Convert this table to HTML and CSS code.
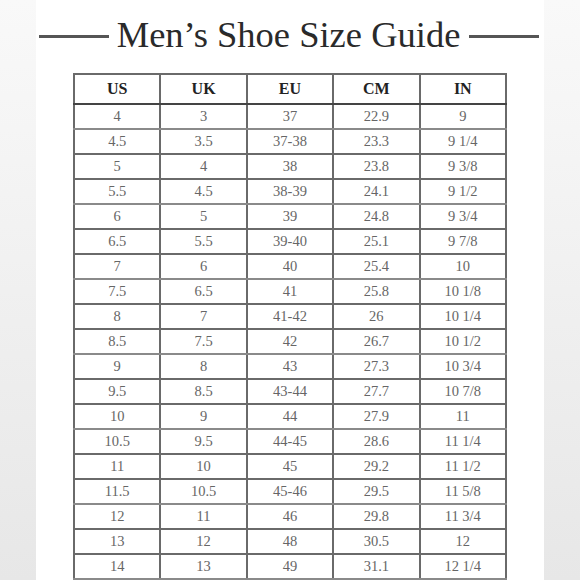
FILE: index.html
```html
<!DOCTYPE html>
<html>
<head>
<meta charset="utf-8">
<link rel="stylesheet" href="styles.css">
</head>
<body>
<div class="panel">
  <div class="title">
    <span class="rule"></span>
    <h1>Men’s Shoe Size Guide</h1>
    <span class="rule"></span>
  </div>
  <table class="sizes">
    <thead>
      <tr><th>US</th><th>UK</th><th>EU</th><th>CM</th><th>IN</th></tr>
    </thead>
    <tbody>
      <tr><td>4</td><td>3</td><td>37</td><td>22.9</td><td>9</td></tr>
      <tr><td>4.5</td><td>3.5</td><td>37-38</td><td>23.3</td><td>9 1/4</td></tr>
      <tr><td>5</td><td>4</td><td>38</td><td>23.8</td><td>9 3/8</td></tr>
      <tr><td>5.5</td><td>4.5</td><td>38-39</td><td>24.1</td><td>9 1/2</td></tr>
      <tr><td>6</td><td>5</td><td>39</td><td>24.8</td><td>9 3/4</td></tr>
      <tr><td>6.5</td><td>5.5</td><td>39-40</td><td>25.1</td><td>9 7/8</td></tr>
      <tr><td>7</td><td>6</td><td>40</td><td>25.4</td><td>10</td></tr>
      <tr><td>7.5</td><td>6.5</td><td>41</td><td>25.8</td><td>10 1/8</td></tr>
      <tr><td>8</td><td>7</td><td>41-42</td><td>26</td><td>10 1/4</td></tr>
      <tr><td>8.5</td><td>7.5</td><td>42</td><td>26.7</td><td>10 1/2</td></tr>
      <tr><td>9</td><td>8</td><td>43</td><td>27.3</td><td>10 3/4</td></tr>
      <tr><td>9.5</td><td>8.5</td><td>43-44</td><td>27.7</td><td>10 7/8</td></tr>
      <tr><td>10</td><td>9</td><td>44</td><td>27.9</td><td>11</td></tr>
      <tr><td>10.5</td><td>9.5</td><td>44-45</td><td>28.6</td><td>11 1/4</td></tr>
      <tr><td>11</td><td>10</td><td>45</td><td>29.2</td><td>11 1/2</td></tr>
      <tr><td>11.5</td><td>10.5</td><td>45-46</td><td>29.5</td><td>11 5/8</td></tr>
      <tr><td>12</td><td>11</td><td>46</td><td>29.8</td><td>11 3/4</td></tr>
      <tr><td>13</td><td>12</td><td>48</td><td>30.5</td><td>12</td></tr>
      <tr><td>14</td><td>13</td><td>49</td><td>31.1</td><td>12 1/4</td></tr>
    </tbody>
  </table>
</div>
</body>
</html>
```
FILE: styles.css
```css
html, body {
  margin: 0;
  padding: 0;
  height: 580px;
  overflow: hidden;
}
body {
  background: linear-gradient(#f9f9f9, #e7e7e7);
  font-family: "Liberation Serif", "Times New Roman", serif;
}
.panel {
  width: 508px;
  height: 600px;
  margin-left: 36px;
  background: #fff;
  box-sizing: border-box;
  padding: 0 5px 0 3px;
}
.title {
  display: flex;
  align-items: center;
  height: 73px;
}
.title h1 {
  margin: 0 9px 0 8px;
  font-weight: normal;
  font-size: 36.5px;
  line-height: 38px;
  color: #2a2a2a;
  white-space: nowrap;
  position: relative;
  top: -2px;
}
.rule {
  flex: 1;
  height: 2.5px;
  background: #555;
}
.sizes {
  margin-left: 34px;
  border-collapse: collapse;
  table-layout: fixed;
  width: 434px;
  border: 2px solid #555;
}
.sizes th, .sizes td {
  border: 2px solid #6a6a6a;
  text-align: center;
  padding: 0;
}
.sizes th {
  height: 28px;
  font-size: 16px;
  font-weight: bold;
  color: #222;
  border-bottom-color: #444;
}
.sizes td {
  height: 23px;
  font-size: 14.5px;
  color: #666;
}
.sizes tbody tr:nth-child(3n+1) td {
  border-bottom-color: #8a8a8a;
}
```
